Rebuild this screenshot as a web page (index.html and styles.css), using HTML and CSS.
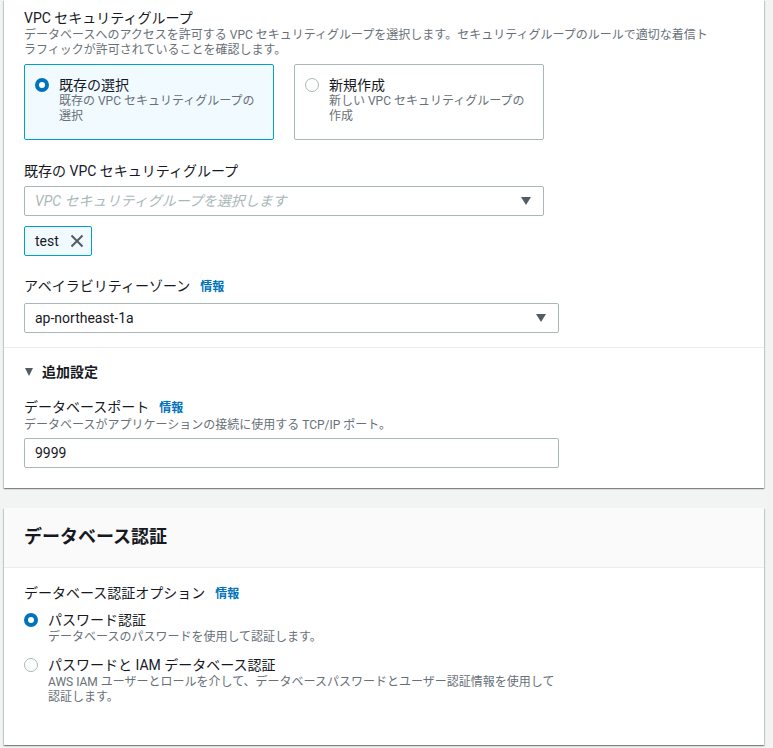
FILE: index.html
```html
<!DOCTYPE html>
<html lang="ja">
<head>
<meta charset="utf-8">
<title>RDS</title>
<link rel="stylesheet" href="styles.css">
</head>
<body>
<div class="page">
  <section class="card">
    <div class="card-body first">
      <div class="label">VPC セキュリティグループ</div>
      <div class="desc desc-wide">データベースへのアクセスを許可する VPC セキュリティグループを選択します。セキュリティグループのルールで適切な着信トラフィックが許可されていることを確認します。</div>
      <div class="tiles">
        <div class="tile selected">
          <span class="radio on"></span>
          <div class="tile-text">
            <div class="tile-title">既存の選択</div>
            <div class="desc">既存の VPC セキュリティグループの選択</div>
          </div>
        </div>
        <div class="tile">
          <span class="radio"></span>
          <div class="tile-text">
            <div class="tile-title">新規作成</div>
            <div class="desc">新しい VPC セキュリティグループの作成</div>
          </div>
        </div>
      </div>

      <div class="label field-gap">既存の VPC セキュリティグループ</div>
      <div class="select narrow">
        <span class="placeholder">VPC セキュリティグループを選択します</span>
        <span class="caret"></span>
      </div>
      <div class="tag">
        <span>test</span>
        <svg class="tag-x" width="14" height="14" viewBox="0 0 14 14"><path d="M1.5 1.5 L12.5 12.5 M12.5 1.5 L1.5 12.5" stroke="#545b64" stroke-width="2" fill="none"/></svg>
      </div>

      <div class="label field-gap2">アベイラビリティーゾーン<a class="info">情報</a></div>
      <div class="select wide az">
        <span class="value">ap-northeast-1a</span>
        <span class="caret"></span>
      </div>
    </div>
    <div class="card-body expand">
      <div class="expand-head"><span class="expand-caret"></span>追加設定</div>
      <div class="label port-label">データベースポート<a class="info">情報</a></div>
      <div class="desc">データベースがアプリケーションの接続に使用する TCP/IP ポート。</div>
      <div class="input wide">9999</div>
    </div>
  </section>

  <section class="card second">
    <header class="card-header"><h2>データベース認証</h2></header>
    <div class="card-body auth">
      <div class="label">データベース認証オプション<a class="info">情報</a></div>
      <div class="radio-group">
        <div class="radio-item">
          <span class="radio on"></span>
          <div>
            <div class="radio-label">パスワード認証</div>
            <div class="desc">データベースのパスワードを使用して認証します。</div>
          </div>
        </div>
        <div class="radio-item">
          <span class="radio"></span>
          <div>
            <div class="radio-label">パスワードと IAM データベース認証</div>
            <div class="desc radio-desc">AWS IAM ユーザーとロールを介して、データベースパスワードとユーザー認証情報を使用して認証します。</div>
          </div>
        </div>
      </div>
    </div>
  </section>
</div>
</body>
</html>
```

FILE: styles.css
```css
html, body {
  margin: 0;
  padding: 0;
  background: #f2f3f3;
}
body {
  font-family: Roboto, "Noto Sans CJK JP", sans-serif;
  color: #16191f;
  font-size: 14px;
  line-height: 20px;
}
.page {
  padding: 0 9px 4px 4px;
  width: 760px;
}
.card {
  background: #fff;
  box-shadow: 0 1px 1px 0 rgba(0, 28, 36, 0.3), 1px 1px 1px 0 rgba(0, 28, 36, 0.15), -1px 1px 1px 0 rgba(0, 28, 36, 0.15);
}
.card.second {
  margin-top: 20px;
}
.card-body {
  padding: 0 20px;
}
.card-body.first {
  padding-top: 8px;
  padding-bottom: 14px;
  border-bottom: 1px solid #eaeded;
}
.label {
  font-size: 14px;
  line-height: 20px;
  color: #16191f;
}
.desc {
  font-size: 12px;
  line-height: 15px;
  color: #687078;
}
.desc-wide {
  max-width: 695px;
}
.tiles {
  display: flex;
  gap: 20px;
  margin-top: 6px;
}
.tile {
  box-sizing: border-box;
  width: 250px;
  height: 76px;
  border: 1px solid #aab7b8;
  border-radius: 2px;
  padding: 11px 10px 15px;
  display: flex;
  gap: 10px;
  align-items: flex-start;
}
.tile.selected {
  border-color: #00a1c9;
  background: #f1faff;
}
.tile-title {
  font-size: 14px;
  line-height: 18px;
}
.tile .radio {
  margin-top: 2px;
}
.radio {
  box-sizing: border-box;
  flex: none;
  width: 14px;
  height: 14px;
  border-radius: 50%;
  border: 1px solid #aab7b8;
  background: #fff;
}
.radio.on {
  border: 4px solid #0073bb;
}
.field-gap {
  margin-top: 21px;
}
.field-gap2 {
  margin-top: 20px;
}
.select, .input {
  box-sizing: border-box;
  height: 30px;
  border: 1px solid #aab7b8;
  border-radius: 2px;
  padding: 0 10px;
  display: flex;
  align-items: center;
  justify-content: space-between;
  font-size: 14px;
  background: #fff;
}
.select {
  margin-top: 5px;
}
.select.az {
  margin-top: 6px;
}
.narrow {
  width: 520px;
}
.wide {
  width: 535px;
}
.placeholder {
  font-style: italic;
  color: #aab7b8;
}
.caret {
  width: 0;
  height: 0;
  border-left: 5.5px solid transparent;
  border-right: 5.5px solid transparent;
  border-top: 8px solid #545b64;
  margin-right: 2px;
}
.tag {
  box-sizing: border-box;
  margin-top: 10px;
  display: inline-flex;
  align-items: center;
  height: 30px;
  padding: 0 7px 0 10px;
  border: 1px solid #00a1c9;
  border-radius: 2px;
  background: #f1faff;
  font-size: 14px;
  gap: 11px;
}
.tag-x {
  display: block;
}
.info {
  margin-left: 10px;
  font-size: 12px;
  font-weight: bold;
  color: #0073bb;
}
.card-body.expand {
  padding-top: 14px;
  padding-bottom: 20px;
}
.expand-head {
  display: flex;
  align-items: center;
  font-weight: bold;
  font-size: 14px;
  line-height: 20px;
  color: #16191f;
}
.expand-caret {
  width: 0;
  height: 0;
  border-left: 4.5px solid transparent;
  border-right: 4.5px solid transparent;
  border-top: 8px solid #545b64;
  margin: 0 9px 0 1px;
}
.port-label {
  margin-top: 15px;
}
.input {
  margin-top: 5px;
  justify-content: flex-start;
}
.card-header {
  background: #fafafa;
  border-bottom: 1px solid #eaeded;
  padding: 17px 20px 18px;
}
.card-header h2 {
  margin: 0;
  font-size: 18px;
  line-height: 24px;
  font-weight: bold;
}
.card-body.auth {
  padding-top: 15px;
  padding-bottom: 40px;
}
.radio-group {
  margin-top: 6px;
  display: flex;
  flex-direction: column;
  gap: 10px;
}
.radio-item {
  display: flex;
  gap: 10px;
  align-items: flex-start;
}
.radio-item .radio {
  margin-top: 3px;
}
.radio-label {
  font-size: 14px;
  line-height: 20px;
}
.radio-desc {
  max-width: 512px;
}
```
